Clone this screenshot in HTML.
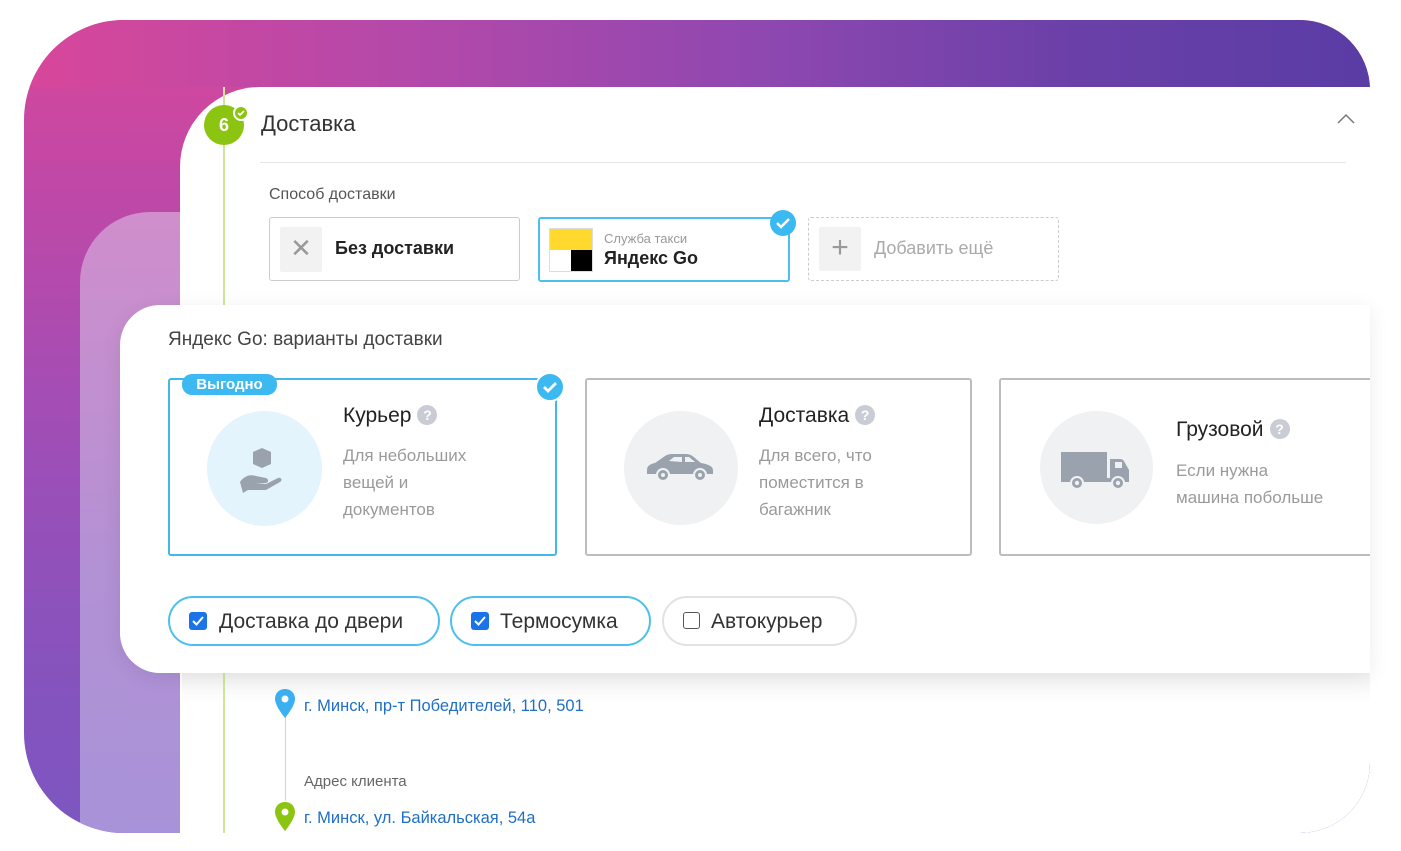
<!DOCTYPE html>
<html><head><meta charset="utf-8"><style>
*{margin:0;padding:0;box-sizing:border-box}
html,body{width:1401px;height:851px;overflow:hidden}
body{background:#fff;position:relative;font-family:"Liberation Sans","Noto Sans CJK SC",sans-serif}
.abs{position:absolute}
#outer{left:24px;top:20px;width:1346px;height:813px;border-radius:100px 70px 70px 100px;overflow:hidden;background:linear-gradient(180deg,#d8479a 0%,#c048a6 20%,#a04eb6 50%,#8653bd 80%,#7d56c1 100%)}
#topband{left:0;top:0;width:1346px;height:67px;background:linear-gradient(90deg,#d8479a 0%,#b249aa 30%,#8e48b0 55%,#6a40a8 78%,#5a3ca5 100%)}
#lav{left:56px;top:192px;width:200px;height:700px;border-radius:70px 0 0 0;background:linear-gradient(180deg,#d08ecc,#b391d4 50%,#a592da)}
#main{left:156px;top:67px;width:1190px;height:746px;background:#fff;border-radius:80px 0 70px 0}
.t{position:absolute;white-space:nowrap}
.btn{position:absolute;border:1px solid #ccc;border-radius:3px;background:#fff}
.sq{position:absolute;background:#f2f2f2;border-radius:2px;color:#999;text-align:center}
.card{position:absolute;border:2px solid #bdbdbd;border-radius:3px;background:#fff}
.circ{position:absolute;border-radius:50%}
.chip{position:absolute;height:50px;border:2px solid #4cc0ec;border-radius:25px;background:#fff;font-size:21px;color:#333}
.cb{position:absolute;left:19px;top:14px;width:18px;height:18px;border-radius:3px;background:#1a73e8}
.q{display:inline-block;width:20px;height:20px;border-radius:50%;background:#c9ccd4;color:#fff;font-size:14px;font-weight:bold;text-align:center;line-height:20px;vertical-align:2px;margin-left:6px}
.desc{font-size:17px;color:#9a9a9a;line-height:27px}
.ttl{font-size:21px;color:#222}
</style></head><body>
<div id="outer" class="abs">
  <div id="topband" class="abs"></div>
  <div id="lav" class="abs"></div>
  <div id="main" class="abs"></div>
</div>
<div class="abs" style="left:223px;top:87px;width:2px;height:746px;background:#cfe59a"></div>
<div class="abs" style="left:204px;top:105px;width:40px;height:40px;border-radius:50%;background:#8cc412;color:#fff;font-weight:bold;font-size:18px;text-align:center;line-height:40px">6</div>
<div class="abs" style="left:233px;top:105px;width:16px;height:16px;border-radius:50%;background:#8cc412;border:2px solid #fff"><svg width="12" height="12" viewBox="0 0 12 12" style="position:absolute;left:0;top:0"><path d="M3 6l2 2 4-4" stroke="#fff" stroke-width="1.6" fill="none"/></svg></div>
<div class="t" style="left:261px;top:111px;font-size:22px;color:#333">Доставка</div>
<svg class="abs" style="left:1336px;top:112px" width="20" height="14"><path d="M2 11L10 3 18 11" stroke="#777" stroke-width="1.5" fill="none"/></svg>
<div class="abs" style="left:260px;top:162px;width:1086px;height:1px;background:#e6e6e6"></div>
<div class="t" style="left:269px;top:186px;font-size:16px;color:#555">Способ доставки</div>
<div class="btn" style="left:269px;top:217px;width:251px;height:64px">
  <div class="sq" style="left:10px;top:9px;width:42px;height:45px;font-size:26px;line-height:43px">✕</div>
  <div class="t" style="left:65px;top:20px;font-size:18px;font-weight:bold;color:#222">Без доставки</div>
</div>
<div class="btn" style="left:538px;top:217px;width:252px;height:65px;border:2px solid #4cc0ec">
  <div class="abs" style="left:9px;top:9px;width:44px;height:44px;border:1px solid #ddd">
    <div class="abs" style="left:0;top:0;width:42px;height:21px;background:#ffd92e"></div>
    <div class="abs" style="left:21px;top:21px;width:21px;height:21px;background:#000"></div>
  </div>
  <div class="t" style="left:64px;top:12px;font-size:13px;color:#999">Служба такси</div>
  <div class="t" style="left:64px;top:29px;font-size:18px;font-weight:bold;color:#222">Яндекс Go</div>
</div>
<div class="abs" style="left:770px;top:210px;width:26px;height:26px;border-radius:50%;background:#3bb9f0"><svg width="26" height="26"><path d="M7 13l4 4 8-8" stroke="#fff" stroke-width="2.5" fill="none"/></svg></div>
<div class="btn" style="left:808px;top:217px;width:251px;height:64px;border:1px dashed #ccc">
  <div class="sq" style="left:10px;top:9px;width:42px;height:44px;font-size:30px;line-height:42px">+</div>
  <div class="t" style="left:65px;top:20px;font-size:18px;color:#aaa">Добавить ещё</div>
</div>

<div class="abs" style="left:182px;top:673px;width:1188px;height:30px;background:linear-gradient(180deg,#f3f3f3,#fff)"></div>
<div class="abs" style="left:223px;top:673px;width:2px;height:160px;background:#cfe59a"></div>
<div class="abs" style="left:285px;top:716px;width:1px;height:85px;background:#b6dcf5"></div>
<svg class="abs" style="left:274px;top:688px" width="22" height="32"><path d="M11 1C5 1 1 5.5 1 11c0 7 10 19 10 19s10-12 10-19C21 5.5 17 1 11 1z" fill="#3aaff2"/><circle cx="11" cy="11" r="3.5" fill="#fff"/></svg>
<div class="t" style="left:304px;top:697px;font-size:16.5px;color:#1f6fc4">г. Минск, пр-т Победителей, 110, 501</div>
<div class="t" style="left:304px;top:773px;font-size:15px;color:#666">Адрес клиента</div>
<svg class="abs" style="left:274px;top:801px" width="22" height="32"><path d="M11 1C5 1 1 5.5 1 11c0 7 10 19 10 19s10-12 10-19C21 5.5 17 1 11 1z" fill="#8cc412"/><circle cx="11" cy="11" r="3.5" fill="#fff"/></svg>
<div class="t" style="left:304px;top:809px;font-size:16.5px;color:#1f6fc4">г. Минск, ул. Байкальская, 54а</div>

<div class="abs" style="left:120px;top:305px;width:1250px;height:368px;background:#fff;border-radius:40px 0 0 40px;box-shadow:0 4px 20px rgba(0,0,0,0.08)"></div>
<div class="t" style="left:168px;top:329px;font-size:19px;color:#444">Яндекс Go: варианты доставки</div>

<div class="card" style="left:168px;top:378px;width:389px;height:178px;border-color:#42b8e8">
  <div class="circ" style="left:37px;top:31px;width:115px;height:115px;background:#e3f4fc"></div>
  <svg class="abs" style="left:68px;top:64px" width="56" height="52" viewBox="0 0 56 52"><path d="M15 8l9-4 9 4v12l-9 4-9-4z" fill="#9aa3ad"/><path d="M2 38c4-6 10-8 16-6l10 2c3 1 3 5-1 5h-9l10 1 12-6c3-1 5 2 2 4L28 46H10l-5 3z" fill="#9aa3ad"/></svg>
  <div class="t ttl" style="left:173px;top:24px">Курьер<span class="q">?</span></div>
  <div class="t desc" style="left:173px;top:62px">Для небольших<br>вещей и<br>документов</div>
</div>
<div class="abs" style="left:182px;top:374px;width:95px;height:21px;border-radius:10px;background:#3bb9f0;color:#fff;font-weight:bold;font-size:15px;text-align:center;line-height:21px">Выгодно</div>
<div class="abs" style="left:535px;top:372px;width:30px;height:30px;border-radius:50%;background:#3bb9f0;border:2px solid #fff"><svg width="26" height="26"><path d="M7 13l4 4 8-8" stroke="#fff" stroke-width="2.8" fill="none"/></svg></div>

<div class="card" style="left:585px;top:378px;width:387px;height:178px">
  <div class="circ" style="left:37px;top:31px;width:114px;height:114px;background:#f0f1f3"></div>
  <svg class="abs" style="left:58px;top:72px" width="72" height="30" viewBox="0 0 72 30"><path d="M2 18c0-4 3-6 8-7l10-7c3-2 6-2 9-2h12c4 0 7 2 10 5l5 4c6 1 12 3 12 7v4H2z" fill="#9aa3ad"/><path d="M24 9l5-4h8v5zM40 5h4l6 5h-10z" fill="#f0f1f3"/><circle cx="18" cy="23" r="6" fill="#9aa3ad" stroke="#f0f1f3" stroke-width="2"/><circle cx="55" cy="23" r="6" fill="#9aa3ad" stroke="#f0f1f3" stroke-width="2"/><circle cx="18" cy="23" r="2" fill="#f0f1f3"/><circle cx="55" cy="23" r="2" fill="#f0f1f3"/></svg>
  <div class="t ttl" style="left:172px;top:24px">Доставка<span class="q">?</span></div>
  <div class="t desc" style="left:172px;top:62px">Для всего, что<br>поместится в<br>багажник</div>
</div>

<div class="abs" style="left:999px;top:378px;width:371px;height:178px;overflow:hidden">
<div class="card" style="left:0;top:0;width:400px;height:178px">
  <div class="circ" style="left:39px;top:31px;width:113px;height:113px;background:#f0f1f3"></div>
  <svg class="abs" style="left:58px;top:70px" width="72" height="42" viewBox="0 0 72 42"><rect x="2" y="2" width="46" height="26" fill="#9aa3ad"/><rect x="2" y="28" width="68" height="4" fill="#9aa3ad"/><path d="M51 9h10c3 0 4 2 5 4l4 7v10H51z" fill="#9aa3ad"/><rect x="56" y="12" width="7" height="6" fill="#f0f1f3"/><circle cx="18" cy="33" r="6" fill="#9aa3ad" stroke="#f0f1f3" stroke-width="2"/><circle cx="59" cy="33" r="6" fill="#9aa3ad" stroke="#f0f1f3" stroke-width="2"/><circle cx="18" cy="33" r="2.2" fill="#f0f1f3"/><circle cx="59" cy="33" r="2.2" fill="#f0f1f3"/></svg>
  <div class="t ttl" style="left:175px;top:38px">Грузовой<span class="q">?</span></div>
  <div class="t desc" style="left:175px;top:77px">Если нужна<br>машина побольше</div>
</div>
</div>

<div class="chip" style="left:168px;top:596px;width:272px"><div class="cb"><svg width="18" height="18"><path d="M4 9l3.5 3.5L14 5" stroke="#fff" stroke-width="2" fill="none"/></svg></div><span class="t" style="left:49px;top:12px">Доставка до двери</span></div>
<div class="chip" style="left:450px;top:596px;width:201px"><div class="cb"><svg width="18" height="18"><path d="M4 9l3.5 3.5L14 5" stroke="#fff" stroke-width="2" fill="none"/></svg></div><span class="t" style="left:48px;top:12px">Термосумка</span></div>
<div class="chip" style="left:662px;top:596px;width:195px;border-color:#e2e2e2"><div class="cb" style="background:#fff;border:1.5px solid #555;left:19px;top:14px;width:17px;height:17px"></div><span class="t" style="left:47px;top:12px">Автокурьер</span></div>
</body></html>
